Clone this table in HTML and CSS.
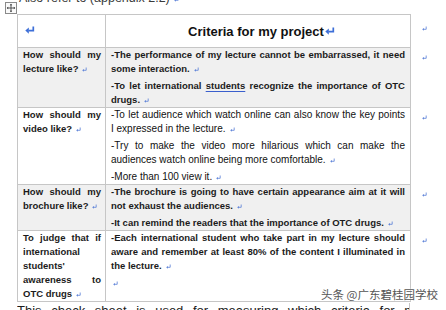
FILE: index.html
```
<!DOCTYPE html>
<html>
<head>
<meta charset="utf-8">
<link rel="stylesheet" href="styles.css">
</head>
<body>
<div class="page">
  <p class="lead">Also refer to (appendix 2.2)<svg class="pm" viewBox="0 0 5 5"><path d="M4.2 0.5V3.3H1.4"/><path class="h" d="M0.2 3.3L1.9 1.9V4.7z"/></svg></p>
  <div class="tablewrap">
    <span class="handle"><svg viewBox="0 0 11 11"><path d="M5.5 1.5V9.5M1.5 5.5H9.5"/><path class="h" d="M5.5 0.8L4.2 2.4H6.8zM5.5 10.2L4.2 8.6H6.8zM0.8 5.5L2.4 4.2V6.8zM10.2 5.5L8.6 4.2V6.8z"/></svg></span>
    <table>
      <colgroup><col class="k1"><col class="k2"><col class="k3"></colgroup>
      <tr class="head">
        <td class="c1"><svg class="ret" viewBox="0 0 10 8"><path d="M8.3 0.6V4.6H3.5"/><path class="h" d="M0.3 4.6L3.8 1.4V7.8z"/></svg></td>
        <td class="c2 title">Criteria for my project<svg class="ret" viewBox="0 0 10 8"><path d="M8.3 0.6V4.6H3.5"/><path class="h" d="M0.3 4.6L3.8 1.4V7.8z"/></svg></td>
        <td class="m"><svg class="pm" viewBox="0 0 5 5"><path d="M4.2 0.5V3.3H1.4"/><path class="h" d="M0.2 3.3L1.9 1.9V4.7z"/></svg></td>
      </tr>
      <tr class="grey">
        <td class="c1">
          <p><span class="jl">How should my</span><span class="ln">lecture like?<svg class="pm" viewBox="0 0 5 5"><path d="M4.2 0.5V3.3H1.4"/><path class="h" d="M0.2 3.3L1.9 1.9V4.7z"/></svg></span></p>
        </td>
        <td class="c2">
          <p><span class="jl">-The performance of my lecture cannot be embarrassed, it need</span><span class="ln">some interaction.<svg class="pm" viewBox="0 0 5 5"><path d="M4.2 0.5V3.3H1.4"/><path class="h" d="M0.2 3.3L1.9 1.9V4.7z"/></svg></span></p>
          <p><span class="jl">-To let international <u class="gram">students</u> recognize the importance of OTC</span><span class="ln">drugs.<svg class="pm" viewBox="0 0 5 5"><path d="M4.2 0.5V3.3H1.4"/><path class="h" d="M0.2 3.3L1.9 1.9V4.7z"/></svg></span></p>
        </td>
        <td class="m"><svg class="pm" viewBox="0 0 5 5"><path d="M4.2 0.5V3.3H1.4"/><path class="h" d="M0.2 3.3L1.9 1.9V4.7z"/></svg></td>
      </tr>
      <tr>
        <td class="c1">
          <p><span class="jl">How should my</span><span class="ln">video like?<svg class="pm" viewBox="0 0 5 5"><path d="M4.2 0.5V3.3H1.4"/><path class="h" d="M0.2 3.3L1.9 1.9V4.7z"/></svg></span></p>
        </td>
        <td class="c2 light">
          <p><span class="jl">-To let audience which watch online can also know the key points</span><span class="ln">I expressed in the lecture.<svg class="pm" viewBox="0 0 5 5"><path d="M4.2 0.5V3.3H1.4"/><path class="h" d="M0.2 3.3L1.9 1.9V4.7z"/></svg></span></p>
          <p><span class="jl">-Try to make the video more hilarious which can make the</span><span class="ln">audiences watch online being more comfortable.<svg class="pm" viewBox="0 0 5 5"><path d="M4.2 0.5V3.3H1.4"/><path class="h" d="M0.2 3.3L1.9 1.9V4.7z"/></svg></span></p>
          <p><span class="ln">-More than 100 view it.<svg class="pm" viewBox="0 0 5 5"><path d="M4.2 0.5V3.3H1.4"/><path class="h" d="M0.2 3.3L1.9 1.9V4.7z"/></svg></span></p>
        </td>
        <td class="m"><svg class="pm" viewBox="0 0 5 5"><path d="M4.2 0.5V3.3H1.4"/><path class="h" d="M0.2 3.3L1.9 1.9V4.7z"/></svg></td>
      </tr>
      <tr class="grey">
        <td class="c1">
          <p><span class="jl">How should my</span><span class="ln">brochure like?<svg class="pm" viewBox="0 0 5 5"><path d="M4.2 0.5V3.3H1.4"/><path class="h" d="M0.2 3.3L1.9 1.9V4.7z"/></svg></span></p>
        </td>
        <td class="c2">
          <p><span class="jl">-The brochure is going to have certain appearance aim at it will</span><span class="ln">not exhaust the audiences.<svg class="pm" viewBox="0 0 5 5"><path d="M4.2 0.5V3.3H1.4"/><path class="h" d="M0.2 3.3L1.9 1.9V4.7z"/></svg></span></p>
          <p><span class="ln">-It can remind the readers that the importance of OTC drugs.<svg class="pm" viewBox="0 0 5 5"><path d="M4.2 0.5V3.3H1.4"/><path class="h" d="M0.2 3.3L1.9 1.9V4.7z"/></svg></span></p>
        </td>
        <td class="m"><svg class="pm" viewBox="0 0 5 5"><path d="M4.2 0.5V3.3H1.4"/><path class="h" d="M0.2 3.3L1.9 1.9V4.7z"/></svg></td>
      </tr>
      <tr>
        <td class="c1">
          <p><span class="jl">To judge that if</span><span class="ln">international</span><span class="ln">students'</span><span class="jl">awareness to</span><span class="ln">OTC drugs<svg class="pm" viewBox="0 0 5 5"><path d="M4.2 0.5V3.3H1.4"/><path class="h" d="M0.2 3.3L1.9 1.9V4.7z"/></svg></span></p>
        </td>
        <td class="c2">
          <p><span class="jl">-Each international student who take part in my lecture should</span><span class="jl">aware and remember at least 80% of the content I illuminated in</span><span class="ln">the lecture.<svg class="pm" viewBox="0 0 5 5"><path d="M4.2 0.5V3.3H1.4"/><path class="h" d="M0.2 3.3L1.9 1.9V4.7z"/></svg></span></p>
          <p><span class="ln"><svg class="pm first" viewBox="0 0 5 5"><path d="M4.2 0.5V3.3H1.4"/><path class="h" d="M0.2 3.3L1.9 1.9V4.7z"/></svg></span></p>
        </td>
        <td class="m"><svg class="pm" viewBox="0 0 5 5"><path d="M4.2 0.5V3.3H1.4"/><path class="h" d="M0.2 3.3L1.9 1.9V4.7z"/></svg></td>
      </tr>
    </table>
  </div>
  <p class="after">This check sheet is used for measuring which criteria for my project are met and which are not.</p>
  <div class="wm">头条 @广东碧桂园学校</div>
</div>
</body>
</html>
```
FILE: styles.css
```
html, body {
  margin: 0;
  background: #fff;
}
body {
  font-family: "Liberation Sans", Arial, sans-serif;
  color: #1b1b1b;
}
.page {
  position: relative;
  width: 446px;
  height: 310px;
  overflow: hidden;
  padding-left: 17px;
  box-sizing: border-box;
}
.lead {
  margin: -9px 0 9px 2px;
  font-size: 12.5px;
  line-height: 14px;
  color: #3a3a3a;
}
.tablewrap {
  position: relative;
}
.handle {
  position: absolute;
  left: -12px;
  top: -12px;
  width: 10px;
  height: 10px;
  border: 1px solid #8a8a8a;
  background: #fafafa;
  display: block;
}
.handle svg {
  display: block;
  width: 10px;
  height: 10px;
}
.handle path {
  stroke: #333;
  stroke-width: 0.9;
  fill: none;
}
.handle path.h {
  fill: #333;
  stroke: none;
}
table {
  border-collapse: collapse;
  table-layout: fixed;
  width: 423px;
}
col.k1 { width: 88px; }
col.k2 { width: 305px; }
col.k3 { width: 30px; }
td {
  padding: 0;
  vertical-align: top;
}
td.c1, td.c2 {
  border: 1px solid #c6c6c6;
}
td.c1 {
  padding: 0 4px 0 5px;
}
td.c2 {
  padding: 0 5px 0 5px;
}
td.m {
  padding: 0 0 0 7px;
  line-height: 14px;
}
tr.grey td.c1, tr.grey td.c2 {
  background: #f0f0f0;
}
tr.head td {
  height: 29px;
  vertical-align: middle;
}
tr.head td.m {
  vertical-align: top;
  padding-top: 4px;
}
.title {
  text-align: center;
  font-size: 13px;
  font-weight: bold;
  color: #111;
}
td.c2.title {
  padding-left: 12px;
}
.ret {
  width: 10px;
  height: 8px;
  vertical-align: 1px;
}
.title .ret {
  margin-left: 1px;
}
.ret path {
  fill: none;
  stroke: #3d6fd8;
  stroke-width: 1.7;
}
.ret path.h {
  fill: #3d6fd8;
  stroke: none;
}
.c1 .ret {
  margin-left: 2px;
  vertical-align: 2px;
}
td p {
  margin: 0;
  font-size: 9.5px;
  line-height: 14px;
  font-weight: bold;
}
td p + p {
  margin-top: 3px;
}
.light p {
  font-weight: normal;
  font-size: 10px;
  color: #111;
}
.jl {
  display: block;
  text-align: justify;
  text-align-last: justify;
  white-space: nowrap;
}
.ln {
  display: block;
  white-space: nowrap;
}
.gram {
  text-decoration: underline;
  text-decoration-color: #3a5fcd;
  text-underline-offset: 1.5px;
}
.pm {
  width: 5px;
  height: 5px;
  margin-left: 4px;
  vertical-align: 0;
}
.pm.first {
  margin-left: 2px;
}
.pm path {
  fill: none;
  stroke: #5b80d8;
  stroke-width: 0.8;
}
.pm path.h {
  fill: #5b80d8;
  stroke: none;
}
.after {
  margin: 1px 0 0 0;
  width: 392px;
  border-right: 1px solid #c6c6c6;
  font-size: 13px;
  line-height: 16px;
  word-spacing: 6px;
  color: #1b1b1b;
  white-space: nowrap;
  overflow: hidden;
}
.wm {
  position: absolute;
  left: 321px;
  top: 287px;
  font-family: "Noto Sans CJK SC", sans-serif;
  font-size: 11.5px;
  line-height: 14px;
  color: #555;
  text-shadow: 0 0 1px #fff, 0 0 2px #fff;
  white-space: nowrap;
}
```
